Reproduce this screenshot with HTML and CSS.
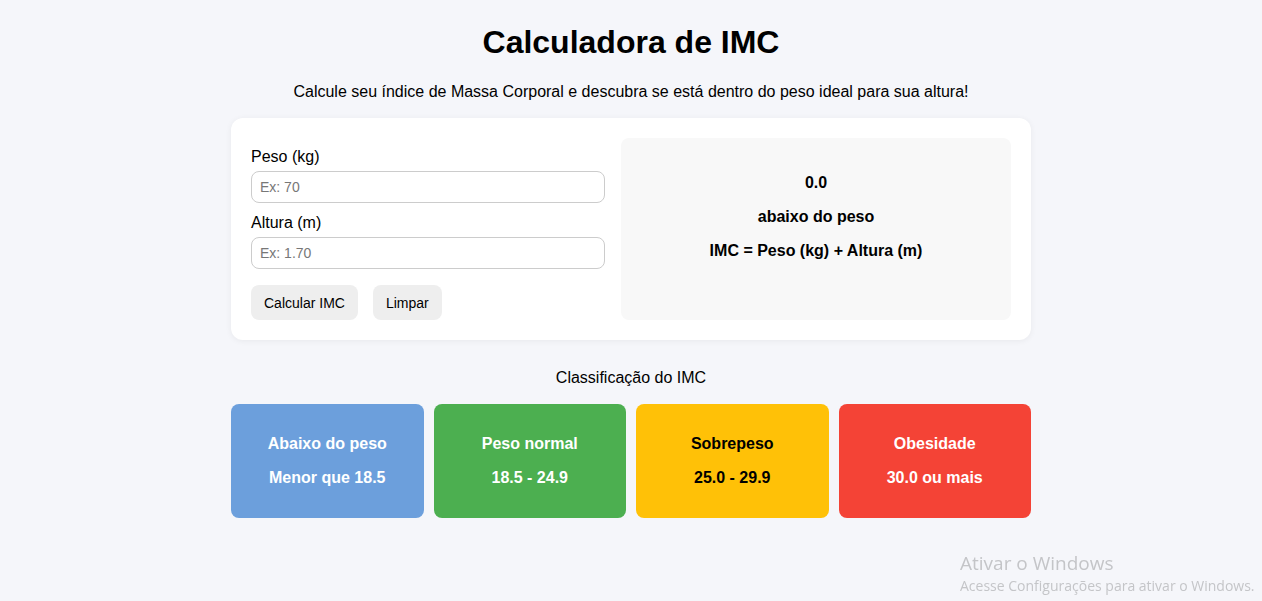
FILE: index.html
```html
<!DOCTYPE html>
<html lang="pt-BR">
<head>
<meta charset="utf-8">
<title>Calculadora de IMC</title>
<link rel="stylesheet" href="styles.css">
</head>
<body>
<main class="page">
  <h1 class="title">Calculadora de IMC</h1>
  <p class="subtitle">Calcule seu índice de Massa Corporal e descubra se está dentro do peso ideal para sua altura!</p>

  <section class="card">
    <div class="form">
      <label class="label" for="peso">Peso (kg)</label>
      <input class="input" id="peso" type="text" placeholder="Ex: 70">
      <label class="label" for="altura">Altura (m)</label>
      <input class="input" id="altura" type="text" placeholder="Ex: 1.70">
      <div class="actions">
        <button class="btn" type="button">Calcular IMC</button>
        <button class="btn" type="button">Limpar</button>
      </div>
    </div>
    <div class="result">
      <p class="result-line">0.0</p>
      <p class="result-line">abaixo do peso</p>
      <p class="result-line">IMC = Peso (kg) + Altura (m)</p>
    </div>
  </section>

  <h2 class="section-title">Classificação do IMC</h2>
  <section class="grid">
    <div class="tile tile-blue"><p>Abaixo do peso</p><p>Menor que 18.5</p></div>
    <div class="tile tile-green"><p>Peso normal</p><p>18.5 - 24.9</p></div>
    <div class="tile tile-yellow"><p>Sobrepeso</p><p>25.0 - 29.9</p></div>
    <div class="tile tile-red"><p>Obesidade</p><p>30.0 ou mais</p></div>
  </section>
</main>

<div class="watermark">
  <div class="wm-title">Ativar o Windows</div>
  <div class="wm-sub">Acesse Configurações para ativar o Windows.</div>
</div>
</body>
</html>
```

FILE: styles.css
```css
* { box-sizing: border-box; }

html, body {
  margin: 0;
  padding: 0;
  background: #f5f6fa;
  font-family: "Liberation Sans", Arial, sans-serif;
  color: #000;
}

body {
  padding-top: 24px;
}

.page {
  width: 800px;
  margin: 0 auto;
}

.title {
  margin: 0;
  font-size: 32px;
  line-height: 37px;
  font-weight: bold;
  text-align: center;
}

.subtitle {
  margin: 22px 0 0;
  font-size: 16px;
  line-height: 18px;
  text-align: center;
}

.card {
  margin-top: 17px;
  background: #fff;
  border-radius: 12px;
  padding: 20px;
  display: grid;
  grid-template-columns: 354px 390px;
  column-gap: 16px;
  box-shadow: 0 1px 6px rgba(0, 0, 0, 0.06);
}

.form {
  padding-top: 10px;
  display: flex;
  flex-direction: column;
}

.label {
  display: block;
  font-size: 16px;
  line-height: 18px;
  margin-bottom: 5px;
}

.input {
  display: block;
  width: 100%;
  height: 32px;
  margin: 0 0 11px;
  padding: 0 8px;
  border: 1px solid #ccc;
  border-radius: 8px;
  font-family: "Liberation Sans", Arial, sans-serif;
  font-size: 14px;
  color: #000;
  background: #fff;
}

.input::placeholder {
  color: #777;
}

.actions {
  display: flex;
  gap: 15px;
  margin-top: 5px;
}

.btn {
  height: 35px;
  padding: 0 13px;
  border: none;
  border-radius: 8px;
  background: #eeeeee;
  font-family: "Liberation Sans", Arial, sans-serif;
  font-size: 14px;
  color: #000;
}

.result {
  background: #f8f8f8;
  border-radius: 8px;
  padding-top: 36px;
  display: flex;
  flex-direction: column;
  align-items: center;
  gap: 16px;
}

.result-line {
  margin: 0;
  font-size: 16px;
  line-height: 18px;
  font-weight: bold;
}

.section-title {
  margin: 29px 0 0;
  font-size: 16px;
  line-height: 18px;
  font-weight: normal;
  text-align: center;
}

.grid {
  margin-top: 17px;
  display: grid;
  grid-template-columns: repeat(4, 1fr);
  gap: 10px;
}

.tile {
  height: 114px;
  border-radius: 8px;
  padding-top: 31px;
  display: flex;
  flex-direction: column;
  align-items: center;
  gap: 16px;
  color: #fff;
}

.tile p {
  margin: 0;
  font-size: 16px;
  line-height: 18px;
  font-weight: bold;
}

.tile-blue { background: #6c9fdc; }
.tile-green { background: #4caf50; }
.tile-yellow { background: #ffc107; color: #000; }
.tile-red { background: #f44336; }

.watermark {
  position: fixed;
  left: 960px;
  top: 551px;
  color: #c4c5c8;
  font-family: "Open Sans", "Noto Sans", sans-serif;
  white-space: nowrap;
}

.wm-title {
  font-size: 19px;
  line-height: 25px;
}

.wm-sub {
  font-size: 14px;
  line-height: 20px;
}
```
